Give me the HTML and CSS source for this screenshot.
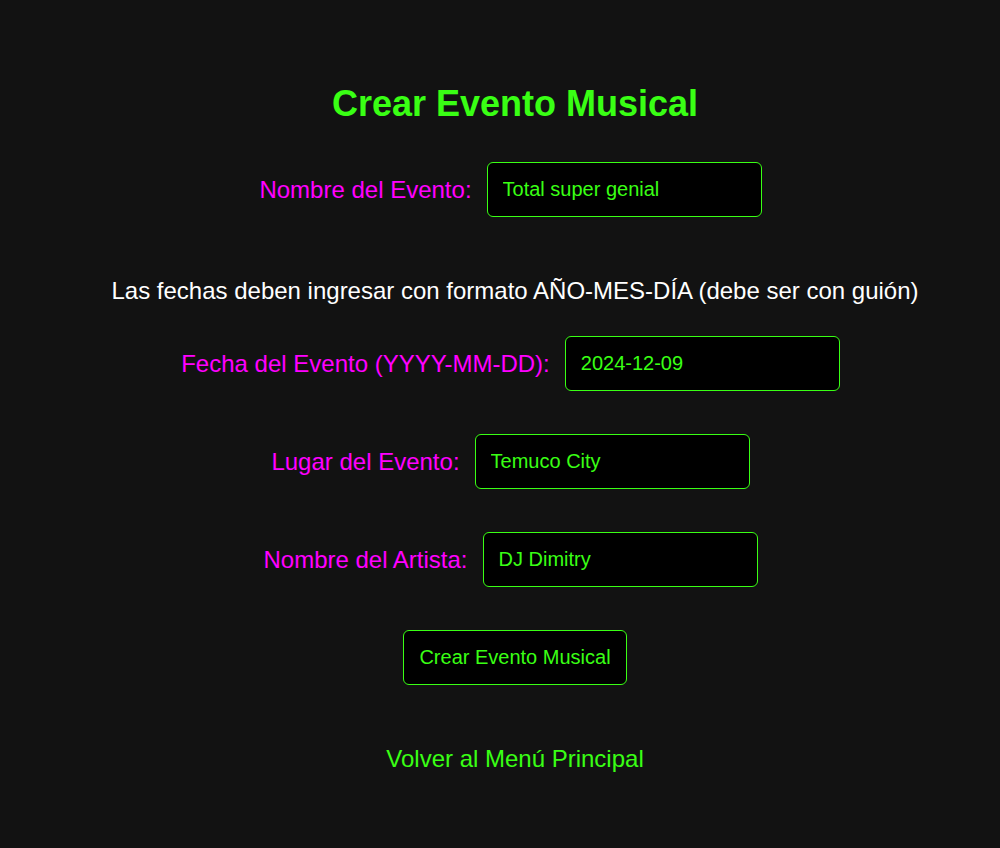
FILE: index.html
```html
<!DOCTYPE html>
<html lang="es">
<head>
<meta charset="utf-8">
<title>Crear Evento Musical</title>
<link rel="stylesheet" href="styles.css">
</head>
<body>
<main class="page">
  <h1 class="title">Crear Evento Musical</h1>
  <form class="form">
    <div class="row">
      <label class="label" for="nombre">Nombre del Evento:</label>
      <input class="field" id="nombre" type="text" value="Total super genial">
    </div>
    <p class="note">Las fechas deben ingresar con formato AÑO-MES-DÍA (debe ser con guión)</p>
    <div class="row row-date">
      <label class="label" for="fecha">Fecha del Evento (YYYY-MM-DD):</label>
      <input class="field" id="fecha" type="text" value="2024-12-09">
    </div>
    <div class="row row-gap">
      <label class="label" for="lugar">Lugar del Evento:</label>
      <input class="field" id="lugar" type="text" value="Temuco City">
    </div>
    <div class="row row-gap">
      <label class="label" for="artista">Nombre del Artista:</label>
      <input class="field" id="artista" type="text" value="DJ Dimitry">
    </div>
    <button class="submit" type="button">Crear Evento Musical</button>
  </form>
  <a class="back" href="#">Volver al Menú Principal</a>
</main>
</body>
</html>
```

FILE: styles.css
```css
html, body {
  margin: 0;
  padding: 0;
  background: #121212;
}

body {
  font-family: "Liberation Sans", Arial, sans-serif;
  font-size: 24px;
  color: #ffffff;
}

.page {
  display: flex;
  flex-direction: column;
  align-items: center;
  padding-left: 30px;
  min-height: 848px;
  box-sizing: border-box;
}

.title {
  margin: 83px 0 0;
  font-size: 36px;
  line-height: 42px;
  font-weight: bold;
  color: #39ff14;
}

.form {
  display: flex;
  flex-direction: column;
  align-items: center;
  margin-top: 37px;
}

.row {
  display: flex;
  align-items: center;
  justify-content: center;
  gap: 15px;
  padding-right: 9px;
}

.row-date {
  margin-top: 31px;
}

.row-gap {
  margin-top: 43px;
}

.label {
  color: #ff00ff;
  font-size: 24px;
  line-height: 28px;
}

.field {
  box-sizing: border-box;
  width: 275px;
  height: 55px;
  padding: 15px;
  background: #000000;
  border: 1px solid #39ff14;
  border-radius: 6px;
  color: #39ff14;
  font-family: "Liberation Sans", Arial, sans-serif;
  font-size: 20px;
  line-height: 23px;
  outline: none;
}

.note {
  margin: 60px 0 0;
  font-size: 24px;
  line-height: 28px;
  color: #ffffff;
}

.submit {
  margin-top: 43px;
  box-sizing: border-box;
  height: 55px;
  padding: 0 15px;
  background: #000000;
  border: 1px solid #39ff14;
  border-radius: 6px;
  color: #39ff14;
  font-family: "Liberation Sans", Arial, sans-serif;
  font-size: 20px;
  line-height: 23px;
  cursor: pointer;
}

.back {
  margin-top: 60px;
  font-size: 24px;
  line-height: 28px;
  color: #39ff14;
  text-decoration: none;
}
```
